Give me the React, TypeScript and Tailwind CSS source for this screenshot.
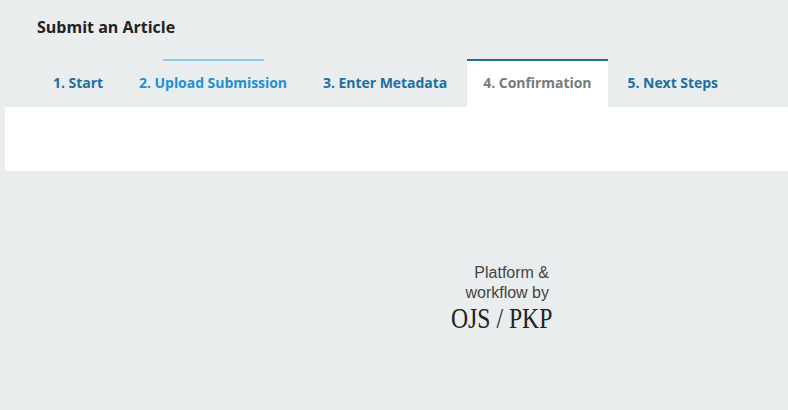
const tabs = [
  { label: "1. Start", color: "text-[#1e6fa0]" },
  { label: "2. Upload Submission", color: "text-[#1e90d2]" },
  { label: "3. Enter Metadata", color: "text-[#1e6fa0]" },
  { label: "4. Confirmation", color: "text-[#7a7a7a]", active: true },
  { label: "5. Next Steps", color: "text-[#1e6fa0]" },
];

export default function App() {
  return (
    <div className="h-[410px] w-[788px] overflow-hidden bg-[#e9edee] font-['Open_Sans','Noto_Sans',sans-serif]">
      <h1 className="pl-[37px] pt-[16px] text-[16px] font-bold leading-[22px] text-[#222222]">Submit an Article</h1>

      <div className="relative mt-[21px] flex h-[48px] gap-[4px] pl-[37px]">
        {tabs.map((tab) => (
          <div
            key={tab.label}
            className={`border-t-2 px-[16px] pt-[12px] text-[14px] font-bold leading-[20px] tracking-[-0.04px] ${
              tab.active ? "border-[#1e6fa0] bg-white" : "border-transparent"
            } ${tab.color}`}
          >
            {tab.label}
          </div>
        ))}
        <div className="absolute left-[163px] top-[0px] h-[2px] w-[101px] bg-[#8ccbea]" />
      </div>

      <div className="ml-[5px] h-[64px] bg-white" />

      <div className="ml-[440px] mt-[92px] flex w-[112px] flex-col items-end">
        <div className="pr-[3px] text-right font-['Liberation_Sans',sans-serif] text-[16px] leading-[20px] text-[#444444]">
          <div>Platform &amp;</div>
          <div>workflow by</div>
        </div>
        <div className="origin-right scale-x-[0.79] whitespace-nowrap font-['Liberation_Serif',serif] text-[30px] leading-[30px] text-[#222222]">
          OJS / PKP
        </div>
      </div>
    </div>
  );
}
